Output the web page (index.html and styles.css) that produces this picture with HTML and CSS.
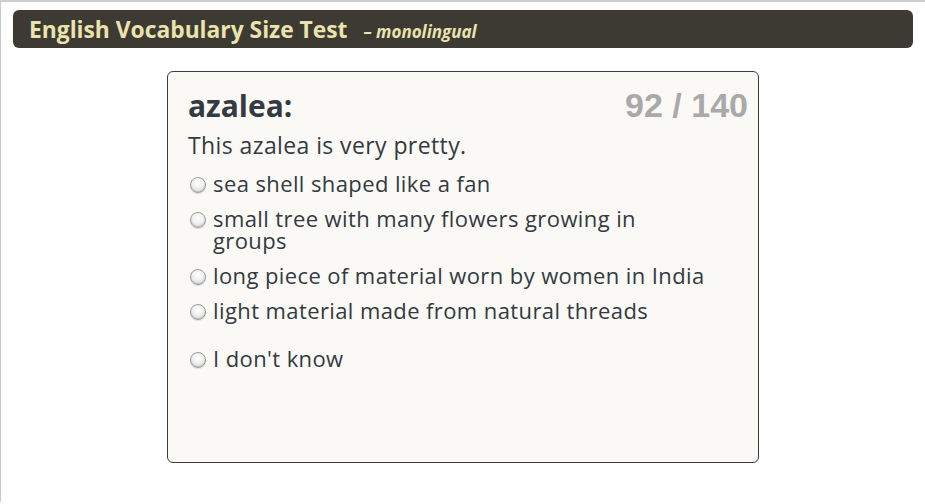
FILE: index.html
```html
<!DOCTYPE html>
<html>
<head>
<meta charset="utf-8">
<link rel="stylesheet" href="styles.css">
</head>
<body>
<div class="page">
  <header class="topbar">
    <h1 class="title">English Vocabulary Size Test</h1>
    <span class="subtitle">– monolingual</span>
  </header>
  <main class="card">
    <div class="card-head">
      <h2 class="word">azalea:</h2>
      <div class="count">92 / 140</div>
    </div>
    <p class="sentence">This azalea is very pretty.</p>
    <ul class="options">
      <li class="option"><span class="radio"></span><span class="label">sea shell shaped like a fan</span></li>
      <li class="option"><span class="radio"></span><span class="label">small tree with many flowers growing in groups</span></li>
      <li class="option"><span class="radio"></span><span class="label">long piece of material worn by women in India</span></li>
      <li class="option"><span class="radio"></span><span class="label">light material made from natural threads</span></li>
      <li class="option dontknow"><span class="radio"></span><span class="label">I don't know</span></li>
    </ul>
  </main>
</div>
</body>
</html>
```
FILE: styles.css
```css
html, body {
  margin: 0;
  padding: 0;
  background: #ffffff;
}
body {
  border-top: 2px solid #cfcfcf;
  border-left: 1px solid #c8c8c8;
  min-height: 502px;
  box-sizing: border-box;
  font-family: "Open Sans", "DejaVu Sans", sans-serif;
}
.page {
  padding: 8px 12px 0 12px;
}
.topbar {
  display: flex;
  align-items: center;
  gap: 16px;
  height: 38px;
  box-sizing: border-box;
  padding: 1px 16px 0 16px;
  background: #3c3a33;
  border-radius: 6px;
}
.title {
  margin: 0;
  font-size: 22.8px;
  line-height: 28px;
  font-weight: 700;
  color: #ebe3ad;
}
.subtitle {
  margin-top: 3px;
  font-size: 17px;
  font-style: italic;
  font-weight: 700;
  color: #ebe3ad;
}
.card {
  width: 592px;
  height: 392px;
  box-sizing: border-box;
  margin: 23px 0 0 154px;
  background: #faf9f6;
  border: 1px solid #3a3d40;
  border-radius: 6px;
  padding: 13px 10px 0 20px;
  color: #333a40;
}
.card-head {
  display: flex;
  justify-content: space-between;
  align-items: baseline;
  height: 40px;
}
.word {
  margin: 0;
  font-size: 30px;
  line-height: 40px;
  font-weight: 700;
  color: #333a40;
}
.count {
  font-family: "Liberation Sans", Arial, sans-serif;
  font-weight: 700;
  font-size: 34px;
  line-height: 40px;
  color: #a9a9a9;
}
.sentence {
  margin: 5px 0 12px 0;
  font-size: 23px;
  line-height: 30px;
  letter-spacing: 0.4px;
}
.options {
  list-style: none;
  margin: 0;
  padding: 0;
}
.option {
  display: flex;
  align-items: flex-start;
  gap: 7px;
  font-size: 22px;
  line-height: 22px;
  letter-spacing: 0.4px;
  margin-bottom: 13px;
  padding-right: 33px;
}
.option.dontknow {
  margin-top: 26px;
}
.radio {
  flex: none;
  width: 16px;
  height: 16px;
  margin: 5px 0 0 2px;
  border-radius: 50%;
  border: 1px solid #9c9c9c;
  box-sizing: border-box;
  background: radial-gradient(circle at 50% 35%, #ffffff 0%, #f0f0f0 45%, #cfcfcf 100%);
  box-shadow: inset 0 -1px 1px rgba(0,0,0,0.12), 0 1px 1px rgba(0,0,0,0.12);
}
```
